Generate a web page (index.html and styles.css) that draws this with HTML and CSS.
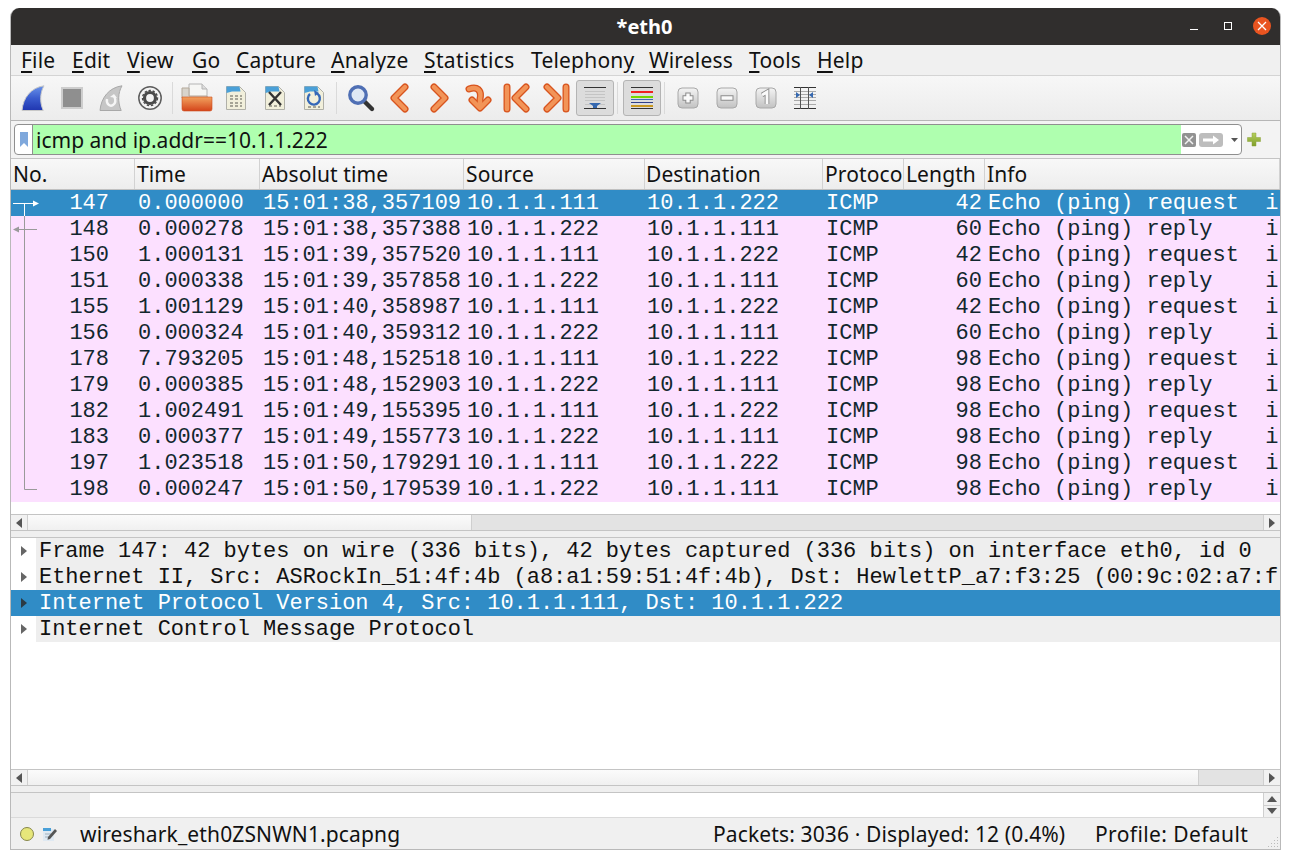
FILE: index.html
```html
<!DOCTYPE html>
<html lang="en">
<head>
<meta charset="utf-8">
<title>*eth0</title>
<link rel="stylesheet" href="styles.css">
</head>
<body>
<svg class="defs" width="0" height="0" aria-hidden="true">
  <defs>
    <linearGradient id="finBlue" x1="0" y1="0" x2="0" y2="1"><stop offset="0" stop-color="#6a94ea"/><stop offset=".5" stop-color="#3a5cce"/><stop offset="1" stop-color="#2036b0"/></linearGradient>
    <linearGradient id="folder" x1="0" y1="0" x2="0" y2="1"><stop offset="0" stop-color="#f2a25e"/><stop offset="1" stop-color="#d4441a"/></linearGradient>
    <linearGradient id="btnGrey" x1="0" y1="0" x2="0" y2="1"><stop offset="0" stop-color="#f4f4f4"/><stop offset="1" stop-color="#c2c2c2"/></linearGradient>
    <linearGradient id="plusGreen" x1="0" y1="0" x2="0" y2="1"><stop offset="0" stop-color="#b6cf5e"/><stop offset="1" stop-color="#7f9f2a"/></linearGradient>
  </defs>
</svg>
<div class="window">
  <header class="titlebar">
    <span class="title">*eth0</span>
    <div class="wm">
      <svg class="wm-min" width="10" height="10" viewBox="0 0 10 10"><rect x="1" y="8" width="8" height="1" fill="#fff"/></svg>
      <svg class="wm-max" width="10" height="10" viewBox="0 0 10 10"><rect x="1.5" y="1.5" width="7" height="7" fill="none" stroke="#fff" stroke-width="1"/></svg>
      <span class="wm-close"><svg width="18" height="18" viewBox="0 0 18 18"><path d="M5 5l8 8M13 5l-8 8" stroke="#fff" stroke-width="1.3" fill="none"/></svg></span>
    </div>
  </header>

  <nav class="menubar">
    <span class="m m-file"><u>F</u>ile</span>
    <span class="m m-edit"><u>E</u>dit</span>
    <span class="m m-view"><u>V</u>iew</span>
    <span class="m m-go"><u>G</u>o</span>
    <span class="m m-capture"><u>C</u>apture</span>
    <span class="m m-analyze"><u>A</u>nalyze</span>
    <span class="m m-statistics"><u>S</u>tatistics</span>
    <span class="m m-telephony">Telephon<u>y</u></span>
    <span class="m m-wireless"><u>W</u>ireless</span>
    <span class="m m-tools"><u>T</u>ools</span>
    <span class="m m-help"><u>H</u>elp</span>
  </nav>

  <div class="toolbar">
    <span class="tb"><svg width="24" height="26" viewBox="0 0 24 26"><path d="M1 25.500C2 13 10 2.500 23 .8c-4 7-4.500 16-.8 24.700z" fill="url(#finBlue)" stroke="#c8c8c8" stroke-width="1"/></svg></span>
    <span class="tb"><svg width="24" height="24" viewBox="0 0 24 24"><rect x="2" y="2" width="20" height="20" fill="#8f8f8f" stroke="#cdcdcd" stroke-width="2"/></svg></span>
    <span class="tb"><svg width="24" height="26" viewBox="0 0 24 26"><path d="M1 25.500C2 13 10 2.500 23 .8c-4 7-4.500 16-.8 24.700z" fill="#c6c6c6" stroke="#a8a8a8" stroke-width="1"/><path d="M8 14c-1 5 3 8 6 6s3-5 1-9" fill="none" stroke="#f6f6f6" stroke-width="2.4"/><path d="M11 12l4-3 3 4z" fill="#f6f6f6"/></svg></span>
    <span class="tb"><svg width="26" height="26" viewBox="0 0 26 26"><circle cx="13" cy="13" r="11.200" fill="#f3f3f3" stroke="#5e5e5e" stroke-width="1.500"/><circle cx="13" cy="13" r="5.500" fill="none" stroke="#4a4a4a" stroke-width="3.200"/><circle cx="13" cy="13" r="7.500" fill="none" stroke="#4a4a4a" stroke-width="1.400" stroke-dasharray="2.400 1.800"/></svg></span>
    <span class="tsep"></span>
    <span class="tb"><svg width="32" height="30" viewBox="0 0 32 30"><path d="M8 1h13l5 5v14H8z" fill="#f6f6f4" stroke="#b4b4b4"/><path d="M21 1v5h5" fill="#ddd" stroke="#b4b4b4"/><path d="M1 5h7v8h18v2H1z" fill="#d8d4cc" stroke="#b4a99a"/><path d="M1 14h30v12a2 2 0 0 1-2 2H3a2 2 0 0 1-2-2z" fill="url(#folder)" stroke="#cf4d1e" stroke-width=".6"/></svg></span>
    <span class="tb"><svg width="22" height="26" viewBox="0 0 22 26"><path d="M1.500 1.500h13l6 6v17h-19z" fill="#f1efdb" stroke="#b0b0a8"/><path d="M1.500 1.500h13l1 5H7L1.500 8z" fill="#4aa0d8"/><path d="M5 11h3m2 0h3m2 0h2M5 14h3m2 0h3m2 0h2M5 18h3m2 0h3m2 0h2M5 21h3m2 0h3m2 0h2" stroke="#8c8c80" stroke-width="1.400" fill="none"/></svg></span>
    <span class="tb"><svg width="22" height="26" viewBox="0 0 22 26"><path d="M1.500 1.500h13l6 6v17h-19z" fill="#f1efdb" stroke="#b0b0a8"/><path d="M1.500 1.500h13l1 5H7L1.500 8z" fill="#4aa0d8"/><path d="M5 21h3m2 0h3m2 0h2" stroke="#8c8c80" stroke-width="1.400" fill="none"/><path d="M5 7l12 13M17 7L5 20" stroke="#333" stroke-width="2.400" fill="none"/></svg></span>
    <span class="tb"><svg width="22" height="26" viewBox="0 0 22 26"><path d="M1.500 1.500h13l6 6v17h-19z" fill="#f1efdb" stroke="#b0b0a8"/><path d="M1.500 1.500h13l1 5H7L1.500 8z" fill="#4aa0d8"/><path d="M5 22h3m2 0h3m2 0h2" stroke="#8c8c80" stroke-width="1.400" fill="none"/><path d="M7 9a6 6 0 1 0 7-.5" fill="none" stroke="#3568b8" stroke-width="2.400"/><path d="M11 5l5 3-4 3z" fill="#3568b8"/></svg></span>
    <span class="tsep"></span>
    <span class="tb"><svg width="30" height="30" viewBox="0 0 30 30"><path d="M18 18l8 8" stroke="#333" stroke-width="4.400" stroke-linecap="round"/><circle cx="12" cy="12" r="8.200" fill="#dfe8f4" stroke="#4f6fb4" stroke-width="3.400"/></svg></span>
    <span class="tb"><svg width="26" height="32" viewBox="0 0 26 32"><path d="M18 5L7 16l11 11" class="ar-o"/><path d="M18 5L7 16l11 11" class="ar-i"/></svg></span>
    <span class="tb"><svg width="26" height="32" viewBox="0 0 26 32"><path d="M8 5l11 11L8 27" class="ar-o"/><path d="M8 5l11 11L8 27" class="ar-i"/></svg></span>
    <span class="tb"><svg width="28" height="30" viewBox="0 0 28 30"><path d="M5 6c8-3 13 1 11 10v4" class="ar-o"/><path d="M8 17l8 8 8-8" class="ar-o"/><path d="M5 6c8-3 13 1 11 10v4" class="ar-i"/><path d="M8 17l8 8 8-8" class="ar-i"/></svg></span>
    <span class="tb"><svg width="28" height="32" viewBox="0 0 28 32"><path d="M4 5v22M23 5L12 16l11 11" class="ar-o"/><path d="M4 5v22M23 5L12 16l11 11" class="ar-i"/></svg></span>
    <span class="tb"><svg width="28" height="32" viewBox="0 0 28 32"><path d="M24 5v22M5 5l11 11L5 27" class="ar-o"/><path d="M24 5v22M5 5l11 11L5 27" class="ar-i"/></svg></span>
    <span class="tb on"><svg width="24" height="24" viewBox="0 0 24 24"><rect x="1" y="1" width="22" height="1" fill="#333"/><rect x="2" y="5" width="20" height="1" fill="#c4c4c4"/><rect x="2" y="8" width="20" height="1" fill="#c4c4c4"/><rect x="2" y="11" width="20" height="1" fill="#c4c4c4"/><rect x="2" y="14" width="20" height="1" fill="#c4c4c4"/><rect x="2" y="18" width="20" height="1" fill="#c4c4c4"/><rect x="1" y="22" width="22" height="1" fill="#333"/><path d="M6 17h12l-4 3v2h-4v-2z" fill="#3568b0"/></svg></span>
    <span class="tsep"></span>
    <span class="tb on"><svg width="22" height="24" viewBox="0 0 22 24"><rect x="0" y="1" width="22" height="1" fill="#333"/><rect x="0" y="5" width="22" height="2" fill="#f02020"/><rect x="0" y="10" width="22" height="2" fill="#74d800"/><rect x="0" y="13" width="22" height="1" fill="#3f6ab8"/><rect x="0" y="16" width="22" height="1" fill="#2f3f88"/><rect x="0" y="19" width="22" height="2" fill="#c89820"/><rect x="0" y="22" width="22" height="1" fill="#333"/></svg></span>
    <span class="tsep tsep-last"></span>
    <span class="tb"><svg width="24" height="24" viewBox="0 0 24 24"><rect x="2" y="2" width="20" height="20" rx="4" fill="url(#btnGrey)" stroke="#a8a8a8"/><path d="M6.500 12h11M12 6.500v11" stroke="#8c8c8c" stroke-width="5.400"/><path d="M7.500 12h9M12 7.500v9" stroke="#fafafa" stroke-width="3.400"/></svg></span>
    <span class="tb"><svg width="24" height="24" viewBox="0 0 24 24"><rect x="2" y="2" width="20" height="20" rx="4" fill="url(#btnGrey)" stroke="#a8a8a8"/><path d="M5.500 12h13" stroke="#8c8c8c" stroke-width="5.400"/><path d="M6.500 12h11" stroke="#fafafa" stroke-width="3.400"/></svg></span>
    <span class="tb"><svg width="24" height="24" viewBox="0 0 24 24"><rect x="2" y="2" width="20" height="20" rx="4" fill="url(#btnGrey)" stroke="#a8a8a8"/><path d="M8 9l5-3v12" fill="none" stroke="#8c8c8c" stroke-width="4.600"/><path d="M8 9l5-3v12" fill="none" stroke="#fafafa" stroke-width="2.800"/></svg></span>
    <span class="tb"><svg width="24" height="24" viewBox="0 0 24 24"><path d="M1 1.500h22M1 22.500h22" stroke="#333" fill="none"/><path d="M1 5.500h22M1 8.500h22M1 11.500h22M1 14.500h22M1 18.500h22" stroke="#aaa" fill="none"/><path d="M7.500 1v22M15.500 1v22" stroke="#555" fill="none"/><path d="M3 6l4 3-4 3zM20 6l-4 3 4 3z" fill="#3568b0"/></svg></span>
  </div>

  <div class="filterbar">
    <div class="filter">
      <span class="bookmark"><svg width="10" height="17" viewBox="0 0 10 17"><path d="M1 1h8v15L5 12l-4 4z" fill="#7fa8dc"/></svg></span>
      <span class="filter-text">icmp and ip.addr==10.1.1.222</span>
      <span class="filter-end">
        <svg width="14" height="14" viewBox="0 0 14 14"><rect width="14" height="14" rx="2" fill="#929292"/><path d="M3 3l8 8M11 3l-8 8" stroke="#f2f2f2" stroke-width="1.500"/></svg>
        <svg width="24" height="14" viewBox="0 0 24 14"><rect width="24" height="14" rx="3" fill="#bdbdbd"/><path d="M4 5.500h10V2.500l6 4.500-6 4.500V8.500H4z" fill="#fff"/></svg>
        <svg class="fdrop" width="7" height="4" viewBox="0 0 7 4"><path d="M0 0h7L3.500 4z" fill="#555"/></svg>
      </span>
    </div>
    <svg class="fplus" width="14" height="15" viewBox="0 0 14 15"><path d="M5 1h4v4.500h4.500v4H9V14H5V9.500H.5v-4H5z" fill="url(#plusGreen)" stroke="#8aa03a" stroke-width=".5"/></svg>
  </div>

  <section class="packets">
    <div class="head">
      <span class="h c-no">No.</span><span class="h c-time">Time</span><span class="h c-abs">Absolut time</span><span class="h c-src">Source</span><span class="h c-dst">Destination</span><span class="h c-proto">Protocol</span><span class="h c-len">Length</span><span class="h c-info">Info</span>
    </div>
    <div class="rows">
      <div class="row sel"><span class="c-no">147</span><span class="c-time">0.000000</span><span class="c-abs">15:01:38,357109</span><span class="c-src">10.1.1.111</span><span class="c-dst">10.1.1.222</span><span class="c-proto">ICMP</span><span class="c-len">42</span><span class="c-info">Echo (ping) request  i</span></div>
      <div class="row"><span class="c-no">148</span><span class="c-time">0.000278</span><span class="c-abs">15:01:38,357388</span><span class="c-src">10.1.1.222</span><span class="c-dst">10.1.1.111</span><span class="c-proto">ICMP</span><span class="c-len">60</span><span class="c-info">Echo (ping) reply    i</span></div>
      <div class="row"><span class="c-no">150</span><span class="c-time">1.000131</span><span class="c-abs">15:01:39,357520</span><span class="c-src">10.1.1.111</span><span class="c-dst">10.1.1.222</span><span class="c-proto">ICMP</span><span class="c-len">42</span><span class="c-info">Echo (ping) request  i</span></div>
      <div class="row"><span class="c-no">151</span><span class="c-time">0.000338</span><span class="c-abs">15:01:39,357858</span><span class="c-src">10.1.1.222</span><span class="c-dst">10.1.1.111</span><span class="c-proto">ICMP</span><span class="c-len">60</span><span class="c-info">Echo (ping) reply    i</span></div>
      <div class="row"><span class="c-no">155</span><span class="c-time">1.001129</span><span class="c-abs">15:01:40,358987</span><span class="c-src">10.1.1.111</span><span class="c-dst">10.1.1.222</span><span class="c-proto">ICMP</span><span class="c-len">42</span><span class="c-info">Echo (ping) request  i</span></div>
      <div class="row"><span class="c-no">156</span><span class="c-time">0.000324</span><span class="c-abs">15:01:40,359312</span><span class="c-src">10.1.1.222</span><span class="c-dst">10.1.1.111</span><span class="c-proto">ICMP</span><span class="c-len">60</span><span class="c-info">Echo (ping) reply    i</span></div>
      <div class="row"><span class="c-no">178</span><span class="c-time">7.793205</span><span class="c-abs">15:01:48,152518</span><span class="c-src">10.1.1.111</span><span class="c-dst">10.1.1.222</span><span class="c-proto">ICMP</span><span class="c-len">98</span><span class="c-info">Echo (ping) request  i</span></div>
      <div class="row"><span class="c-no">179</span><span class="c-time">0.000385</span><span class="c-abs">15:01:48,152903</span><span class="c-src">10.1.1.222</span><span class="c-dst">10.1.1.111</span><span class="c-proto">ICMP</span><span class="c-len">98</span><span class="c-info">Echo (ping) reply    i</span></div>
      <div class="row"><span class="c-no">182</span><span class="c-time">1.002491</span><span class="c-abs">15:01:49,155395</span><span class="c-src">10.1.1.111</span><span class="c-dst">10.1.1.222</span><span class="c-proto">ICMP</span><span class="c-len">98</span><span class="c-info">Echo (ping) request  i</span></div>
      <div class="row"><span class="c-no">183</span><span class="c-time">0.000377</span><span class="c-abs">15:01:49,155773</span><span class="c-src">10.1.1.222</span><span class="c-dst">10.1.1.111</span><span class="c-proto">ICMP</span><span class="c-len">98</span><span class="c-info">Echo (ping) reply    i</span></div>
      <div class="row"><span class="c-no">197</span><span class="c-time">1.023518</span><span class="c-abs">15:01:50,179291</span><span class="c-src">10.1.1.111</span><span class="c-dst">10.1.1.222</span><span class="c-proto">ICMP</span><span class="c-len">98</span><span class="c-info">Echo (ping) request  i</span></div>
      <div class="row"><span class="c-no">198</span><span class="c-time">0.000247</span><span class="c-abs">15:01:50,179539</span><span class="c-src">10.1.1.222</span><span class="c-dst">10.1.1.111</span><span class="c-proto">ICMP</span><span class="c-len">98</span><span class="c-info">Echo (ping) reply    i</span></div>
      <svg class="related" width="30" height="312" viewBox="0 0 30 312">
        <path d="M2 13.500h22" stroke="#fff" fill="none"/><path d="M22 10.500l6 3-6 3z" fill="#fff"/>
        <path d="M13.500 13.500V26" stroke="#fff" fill="none"/>
        <path d="M13.500 26V299.500H26" stroke="#9a9a9a" fill="none"/>
        <path d="M8 39.500h18" stroke="#9a9a9a" fill="none"/><path d="M8 36.500l-6 3 6 3z" fill="#9a9a9a"/>
      </svg>
    </div>
    <div class="rows-gap"></div>
    <div class="hscroll">
      <span class="sb-btn"><svg width="6" height="10" viewBox="0 0 6 10"><path d="M6 0v10L0 5z" fill="#555"/></svg></span>
      <span class="sb-track sb-a1"></span><span class="sb-thumb sb-a2"></span>
      <span class="sb-btn sb-r"><svg width="6" height="10" viewBox="0 0 6 10"><path d="M0 0v10l6-5z" fill="#555"/></svg></span>
    </div>
  </section>

  <div class="splitter"><span class="grip"></span></div>

  <section class="details">
    <div class="tree">
      <div class="node"><span class="tw"><svg width="6" height="10" viewBox="0 0 6 10"><path d="M0 0v10l6-5z"/></svg></span><span class="nt">Frame 147: 42 bytes on wire (336 bits), 42 bytes captured (336 bits) on interface eth0, id 0</span></div>
      <div class="node"><span class="tw"><svg width="6" height="10" viewBox="0 0 6 10"><path d="M0 0v10l6-5z"/></svg></span><span class="nt">Ethernet II, Src: ASRockIn_51:4f:4b (a8:a1:59:51:4f:4b), Dst: HewlettP_a7:f3:25 (00:9c:02:a7:f</span></div>
      <div class="node sel"><span class="tw"><svg width="6" height="10" viewBox="0 0 6 10"><path d="M0 0v10l6-5z"/></svg></span><span class="nt">Internet Protocol Version 4, Src: 10.1.1.111, Dst: 10.1.1.222</span></div>
      <div class="node"><span class="tw"><svg width="6" height="10" viewBox="0 0 6 10"><path d="M0 0v10l6-5z"/></svg></span><span class="nt">Internet Control Message Protocol</span></div>
    </div>
    <div class="hscroll">
      <span class="sb-btn"><svg width="6" height="10" viewBox="0 0 6 10"><path d="M6 0v10L0 5z" fill="#555"/></svg></span>
      <span class="sb-track sb-b1"></span><span class="sb-thumb sb-b2"></span>
      <span class="sb-btn sb-r"><svg width="6" height="10" viewBox="0 0 6 10"><path d="M0 0v10l6-5z" fill="#555"/></svg></span>
    </div>
  </section>

  <div class="splitter splitter-b"><span class="grip"></span></div>

  <section class="bytes">
    <span class="bytes-off"></span>
    <span class="bytes-hex"></span>
    <span class="spin">
      <span class="spin-b"><svg width="10" height="6" viewBox="0 0 10 6"><path d="M5 0l5 6H0z" fill="#555"/></svg></span>
      <span class="spin-b"><svg width="10" height="6" viewBox="0 0 10 6"><path d="M0 0h10L5 6z" fill="#555"/></svg></span>
    </span>
  </section>

  <footer class="status">
    <span class="led"></span>
    <svg class="note" width="15" height="14" viewBox="0 0 15 14"><rect x="0" y="2" width="11" height="12" fill="#dfe9f2"/><rect x="0" y="1" width="8" height="3" fill="#4aa0d8"/><path d="M2 7h6M2 10h4" stroke="#9fb0bc" fill="none"/><path d="M5 10l7-8 2 2-7 8-2.500.8z" fill="#555"/></svg>
    <span class="s-file">wireshark_eth0ZSNWN1.pcapng</span>
    <span class="s-packets">Packets: 3036 · Displayed: 12 (0.4%)</span>
    <span class="s-profile">Profile: Default</span>
    <svg class="sizegrip" width="12" height="12" viewBox="0 0 12 12"><path d="M10 1h1v1h-1zM7 4h1v1H7zM10 4h1v1h-1zM4 7h1v1H4zM7 7h1v1H7zM10 7h1v1h-1zM1 10h1v1H1zM4 10h1v1H4zM7 10h1v1H7zM10 10h1v1h-1z" fill="#bbb"/></svg>
  </footer>
</div>
</body>
</html>
```
FILE: styles.css
```css
* { box-sizing: border-box; }
html, body { margin: 0; padding: 0; background: #fff; }
body { height: 859px; overflow: hidden; font-family: "Noto Sans", "Open Sans", sans-serif; color: #111; }
.defs { position: absolute; }

.window {
  width: 1271px; height: 842px; margin: 8px 0 0 10px;
  display: flex; flex-direction: column;
  background: #efefef; border-radius: 9px 9px 0 0; overflow: hidden;
  border: 1px solid #b9b9b9; border-top: 0;
}

.titlebar {
  height: 37px; flex: none; background: #302e2d; color: #fff;
  display: flex; align-items: center; justify-content: center; position: relative;
  margin: 0 -1px;
}
.title { font-weight: 700; font-size: 20px; margin-left: -2px; }
.wm { position: absolute; right: 10px; top: 9px; display: flex; align-items: center; }
.wm-min { margin-right: 24px; }
.wm-max { margin-right: 20px; }
.wm-close { width: 18px; height: 18px; border-radius: 50%; background: #e95420; display: block; }
.wm-close svg { display: block; }

.menubar {
  height: 31px; flex: none; display: flex; align-items: center;
  font-size: 21px; letter-spacing: .2px; background: #f0f0f0; border-bottom: 1px solid #d4d4d4; padding-left: 10px;
}
.m { display: block; white-space: nowrap; line-height: 31px; }
.m u { text-decoration-thickness: 2px; text-underline-offset: 3px; }
.m-file { width: 51px; }
.m-edit { width: 55px; }
.m-view { width: 65px; }
.m-go { width: 44px; }
.m-capture { width: 95px; }
.m-analyze { width: 93px; }
.m-statistics { width: 107px; letter-spacing: .35px; }
.m-telephony { width: 118px; }
.m-wireless { width: 100px; }
.m-tools { width: 68px; }

.toolbar {
  height: 45px; flex: none; display: flex; align-items: center; padding-left: 2px;
  background: linear-gradient(#f7f7f7, #ececec); border-bottom: 1px solid #b6b6b6;
}
.tb { width: 39px; height: 36px; display: flex; align-items: center; justify-content: center; flex: none; }
.tb svg { display: block; }
.tb.on { background: #dcdcdc; border: 1px solid #b4b4b4; border-radius: 3px; margin: 0 .5px; width: 38px; }
.tsep { width: 8px; height: 32px; flex: none; position: relative; }
.tsep::after { content: ""; position: absolute; left: 3px; top: 0; bottom: 0; width: 1px; background: #dadada; }
.tsep-last { width: 7px; }
.ar-o { fill: none; stroke: #d8541e; stroke-width: 7; stroke-linecap: round; stroke-linejoin: round; }
.ar-i { fill: none; stroke: #f29458; stroke-width: 4.4; stroke-linecap: round; stroke-linejoin: round; }

.filterbar {
  height: 38px; flex: none; display: flex; align-items: center; padding-left: 3px;
  background: #f3f3f3; border-bottom: 1px solid #c4c4c4;
}
.filter {
  width: 1228px; height: 31px; display: flex; background: #fff;
  border: 1px solid #8f8f8f; border-radius: 4px; overflow: hidden;
}
.bookmark {
  width: 18px; flex: none; display: flex; align-items: center; justify-content: center;
  border-right: 1px solid #8f8f8f;
}
.filter-text {
  width: 1148px; flex: none; background: #afffaf; font-size: 21px; line-height: 30px; padding-left: 3px; color: #111; white-space: nowrap;
}
.filter-end { flex: 1; display: flex; align-items: center; padding-left: 1px; gap: 3px; }
.fdrop { margin-left: 5px; }
.fplus { margin-left: 5px; }

.packets { flex: none; display: flex; flex-direction: column; background: #fff; }
.head {
  height: 31px; display: flex; background: linear-gradient(#f8f8f8, #ededed);
  border-bottom: 1px solid #c0c0c0; font-size: 21px; letter-spacing: .1px; line-height: 29px; color: #111;
}
.h { flex: none; padding: 1px 0 0 2px; border-right: 1px solid #d2d2d2; white-space: nowrap; overflow: hidden; }
.head .c-dst { padding-left: 1px; }
.rows { position: relative; }
.row {
  height: 26px; display: flex; background: #fce0ff; color: #12272e;
  font-family: "Liberation Mono", monospace; font-size: 22px; line-height: 25px; white-space: pre; padding-top: 1px;
}
.row.sel { background: #308cc6; color: #fff; }
.row span { display: block; flex: none; overflow: hidden; padding-left: 3px; }
.row .c-no { text-align: right; padding-right: 26px; }
.row .c-dst { padding-left: 2px; }
.row .c-len { text-align: right; padding-right: 3px; }
.c-no { width: 124px; }
.c-time { width: 125px; }
.c-abs { width: 204px; }
.c-src { width: 181px; }
.c-dst { width: 178px; }
.c-proto { width: 81px; }
.c-len { width: 81px; }
.c-info { width: 295px; }
.related { position: absolute; left: 0; top: 0; }
.rows-gap { height: 12px; background: #fff; }

.hscroll {
  height: 17px; flex: none; display: flex; background: #f7f7f7;
  border-top: 1px solid #c4c4c4; border-bottom: 1px solid #c4c4c4;
}
.sb-btn { width: 17px; flex: none; display: flex; align-items: center; justify-content: center; background: #f1f1f1; border-right: 1px solid #cfcfcf; }
.sb-r { border-right: 0; border-left: 1px solid #cfcfcf; }
.sb-track { background: linear-gradient(#fbfbfb, #f0f0f0); }
.sb-thumb { background: #e3e3e3; border-left: 1px solid #cfcfcf; }
.sb-a1 { width: 443px; }
.sb-a2 { flex: 1; }
.sb-b1 { width: 1170px; }
.sb-b2 { flex: 1; }

.splitter { height: 6px; flex: none; background: #efefef; display: flex; justify-content: center; align-items: center; }
.grip { width: 12px; height: 2px; background-image: radial-gradient(#b0b0b0 40%, transparent 45%); background-size: 2px 2px; }

.details { height: 249px; flex: none; display: flex; flex-direction: column; background: #fff; border-top: 1px solid #c4c4c4; }
.tree { flex: 1; overflow: hidden; }
.node {
  height: 26px; display: flex; font-family: "Liberation Mono", monospace; font-size: 22px; letter-spacing: -.02px; line-height: 25px; color: #111; white-space: pre;
}
.tw { width: 25px; flex: none; display: flex; align-items: center; justify-content: center; fill: #666; }
.nt { flex: 1; background: #eee; padding: 1px 0 0 3px; overflow: hidden; }
.node.sel { background: #308cc6; }
.node.sel .nt { background: none; color: #fff; }
.node.sel .tw { fill: #2b3a44; }

.bytes { height: 25px; flex: none; display: flex; background: #fff; border-top: 1px solid #c4c4c4; }
.bytes-off { width: 79px; flex: none; background: #eee; }
.bytes-hex { flex: 1; }
.spin { width: 17px; flex: none; display: flex; flex-direction: column; background: #f1f1f1; border-left: 1px solid #cfcfcf; }
.spin-b { flex: 1; display: flex; align-items: center; justify-content: center; }
.spin-b + .spin-b { border-top: 1px solid #cfcfcf; }

.status {
  flex: 1; display: flex; align-items: center; position: relative;
  background: #f0f0f0; border-top: 1px solid #dadada; font-size: 21px; letter-spacing: .13px; color: #111; white-space: nowrap;
}
.led { width: 14px; height: 14px; border-radius: 50%; background: #e6e67a; border: 1px solid #86864a; margin-left: 9px; flex: none; }
.note { margin-left: 9px; flex: none; }
.s-file { margin-left: 22px; width: 633px; flex: none; }
.s-packets { width: 382px; flex: none; }
.s-profile { flex: none; letter-spacing: .4px; }
.sizegrip { position: absolute; right: 1px; bottom: 1px; }
```
